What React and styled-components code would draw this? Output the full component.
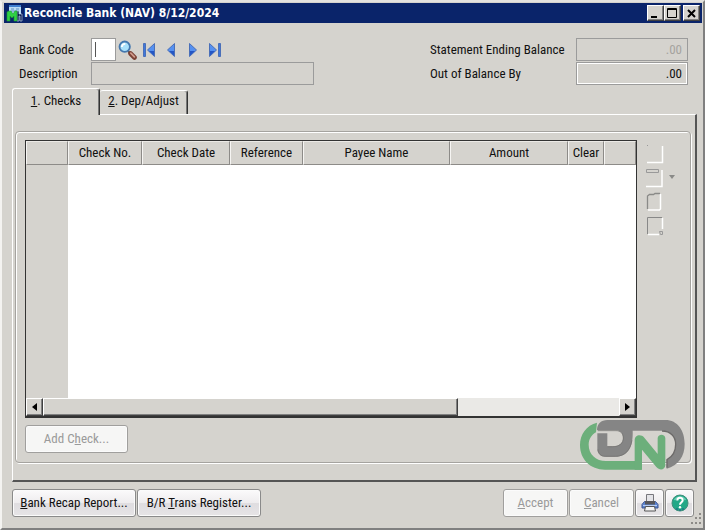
import React, { useState } from 'react'
import styled, { createGlobalStyle, css } from 'styled-components'

const GlobalStyle = createGlobalStyle`
  * {
    box-sizing: border-box;
  }
  body {
    margin: 0;
    background: #d5d3ce;
    color: #111;
    font-family: "Roboto Condensed", "Liberation Sans Narrow", "Liberation Sans", sans-serif;
    font-size: 13px;
    line-height: 16px;
  }
  button, input {
    font: inherit;
    color: inherit;
  }
`

const Window = styled.div`
  position: relative;
  display: flex;
  flex-direction: column;
  height: 100vh;
  min-height: 420px;
  padding: 1px;
  border: 2px solid;
  border-color: #e4e3df #808080 #808080 #f4f3f1;
`

const TitleBar = styled.header`
  display: flex;
  align-items: center;
  gap: 1px;
  height: 20px;
  margin: 0 0 0 1px;
  padding: 0 2px;
  background: #0a246a;
  color: #fff;
`

const Title = styled.h1`
  flex: 1;
  margin: 0;
  font: bold 12px/16px "DejaVu Sans Condensed", "DejaVu Sans", sans-serif;
`

const raised = css`
  border: 1px solid;
  border-color: #fff #404040 #404040 #fff;
  box-shadow: inset -1px -1px #808080;
  background: #d5d3ce;
`

const WindowButtons = styled.div`
  display: flex;
`

const WindowButton = styled.button`
  ${raised}
  width: 17px;
  height: 16px;
  padding: 0;
  margin-left: ${p => (p.$apart ? '2px' : 0)};
  svg {
    display: block;
  }
`

const Form = styled.div`
  display: flex;
  justify-content: space-between;
  padding: 15px 14px 3px 16px;
`

const Fields = styled.div`
  display: grid;
  grid-template-columns: ${p => p.$columns};
  grid-auto-rows: 23px;
  row-gap: 1px;
  align-items: center;
`

const FieldGroup = styled.div`
  display: flex;
  align-items: center;
`

const TextInput = styled.input`
  width: ${p => p.$width || '100%'};
  height: 23px;
  padding: 0 5px;
  border: 1px solid #9b9b9b;
  outline: none;
  background: ${p => (p.$editable ? '#fff' : '#d5d3ce')};
  box-shadow: ${p => (p.$inner ? 'inset 0 0 0 1px #fff' : 'none')};
  text-align: ${p => p.$align || 'left'};
  &:disabled {
    color: #a5a39f;
  }
`

/* steady caret while the field is empty */
const CodeInput = styled(TextInput)`
  padding: 0 3px;
  &:focus:placeholder-shown {
    caret-color: transparent;
    background: linear-gradient(#555, #555) 3px center / 1px 15px no-repeat #fff;
  }
`

const IconButton = styled.button`
  display: flex;
  align-items: center;
  justify-content: center;
  width: 22px;
  height: 22px;
  padding: 0;
  border: 0;
  background: none;
`

const Tabs = styled.div`
  display: flex;
  align-items: flex-end;
  padding-left: 9px;
`

const Tab = styled.button`
  position: relative;
  height: ${p => (p.$active ? '27px' : '24px')};
  width: 88px;
  margin-bottom: ${p => (p.$active ? '-1px' : 0)};
  padding: 0 0 3px;
  z-index: ${p => (p.$active ? 1 : 0)};
  border: 1px solid;
  border-color: #fff #333 transparent #fff;
  border-bottom: 0;
  border-left-width: ${p => (p.$active || p.$first ? '1px' : 0)};
  border-radius: 3px 3px 0 0;
  box-shadow: inset -1px 0 #777;
  background: #d5d3ce;
`

const TabPanel = styled.section`
  flex: 1;
  min-height: 0;
  display: flex;
  margin: 0 5px 0 9px;
  padding: 16px 4px 17px 2px;
  border: 1px solid;
  border-color: #fff #555 #555 #fff;
  border-bottom-width: 2px;
  border-right-width: 2px;
`

const GroupBox = styled.div`
  flex: 1;
  min-width: 0;
  display: flex;
  flex-direction: column;
  align-items: flex-start;
  gap: 7px;
  padding: 8px 9px 9px;
  border: 1px solid #a5a39f;
  border-radius: 4px;
  box-shadow: inset 1px 1px #fff, 1px 1px #fff;
`

const GridRow = styled.div`
  flex: 1;
  min-height: 0;
  width: 100%;
  display: flex;
  gap: 8px;
`

const GridFrame = styled.div`
  flex: 1;
  min-width: 0;
  display: flex;
  flex-direction: column;
  border: 1px solid #333;
  border-width: 1px 1px 2px 1px;
  background: #fff;
`

const GridBody = styled.div`
  flex: 1;
  min-height: 0;
  overflow: hidden;
`

const Table = styled.table`
  width: 100%;
  height: 100%;
  table-layout: fixed;
  border-collapse: separate;
  border-spacing: 0;
`

const HeadCell = styled.th`
  width: ${p => p.$width || 'auto'};
  height: 24px;
  padding: 0 0 1px;
  border: 1px solid;
  border-color: #eceae6 #8d8b88 #8d8b88 #f6f5f3;
  background: #d5d3ce;
  font-weight: normal;
`

const BodyCell = styled.td`
  padding: 0;
  background: ${p => (p.$rowHeader ? '#d5d3ce' : '#fff')};
`

const ScrollBar = styled.div`
  display: flex;
  height: 18px;
  background: #eae9e6;
`

const ScrollButton = styled.button`
  ${raised}
  display: flex;
  align-items: center;
  justify-content: center;
  width: 17px;
  padding: 0;
`

const ScrollTrack = styled.div`
  flex: 1;
  display: flex;
`

const ScrollThumb = styled.div`
  ${raised}
  width: 72%;
`

const SideTools = styled.div`
  display: flex;
  flex-direction: column;
  gap: 2px;
  width: 36px;
  padding-top: 3px;
`

const SideTool = styled.button`
  display: flex;
  align-items: center;
  width: 32px;
  height: 22px;
  padding: 0;
  border: 0;
  background: none;
`

const PushButton = styled.button`
  display: flex;
  align-items: center;
  justify-content: center;
  width: ${p => p.$width};
  height: 28px;
  padding: 0 2px 1px;
  border: 1px solid #8a8a8a;
  border-radius: 3px;
  box-shadow: inset 0 0 0 1px #fbfbfb;
  background: linear-gradient(#fbfafb 0%, #eeecee 50%, #dfdde0 52%, #e6e4e6 100%);
  &:disabled {
    border-color: #a09f9d;
    background: #f6f6f5;
    color: #9a9a9a;
  }
`

const Footer = styled.footer`
  display: flex;
  justify-content: space-between;
  padding: 7px 8px 10px 9px;
`

const ButtonRow = styled.div`
  display: flex;
  gap: 1px;
`

const Watermark = styled.svg`
  position: absolute;
  right: 15px;
  bottom: 53px;
  pointer-events: none;
`

const SizeGrip = styled.svg`
  position: absolute;
  right: 1px;
  bottom: 3px;
`

const COLUMNS = [
  { label: 'Check No.', width: '74px' },
  { label: 'Check Date', width: '88px' },
  { label: 'Reference', width: '73px' },
  { label: 'Payee Name', width: '147px' },
  { label: 'Amount', width: '118px' },
  { label: 'Clear', width: '36px' },
  { label: '' },
]

const AppIcon = () => (
  <svg width="17" height="18" viewBox="0 0 17 18" aria-hidden="true">
    <path d="M3 1h12v9H3z" fill="#b9dcf5" />
    <path d="M3 1h12v2H3z" fill="#3f7fd0" />
    <path d="M5 5h3M10 5h3M5 7h8" stroke="#5f8fc4" />
    <path d="M11 17V7h2v3h3v7h-2v-5h-1v5z" fill="#0a1c4d" stroke="#cfe0f5" strokeWidth=".6" />
    <path d="M1 17V8l2-1h2l2 3 2-3h2v10H8v-5l-2 2-2-2v5z" fill="#2fd044" stroke="#1f9a31" strokeWidth=".6" />
  </svg>
)

const Magnifier = () => (
  <svg width="19" height="20" viewBox="0 0 19 20" aria-hidden="true">
    <path d="M10 11l2 2" stroke="#555" strokeWidth="2" />
    <path d="M12.500 13.500l4 4" stroke="#7a4034" strokeWidth="4.600" strokeLinecap="round" />
    <path d="M12.800 13.200l3.600 3.600" stroke="#cf9a8c" strokeWidth="1.800" strokeLinecap="round" />
    <circle cx="6.700" cy="6.700" r="5.200" fill="#a9e0fa" stroke="#4477ae" strokeWidth="1.800" />
    <path d="M3.800 7a3.500 3.500 0 0 1 3.500-3.200" fill="none" stroke="#fff" strokeWidth="1.800" />
  </svg>
)

const NavArrow = ({ back, bar }) => (
  <svg width="14" height="16" viewBox="0 0 14 16" aria-hidden="true">
    <g
      transform={back ? 'translate(14 0) scale(-1 1)' : undefined}
      fill="#5590f0"
      stroke="#4a6fb8"
      strokeWidth="1"
      strokeLinejoin="round"
    >
      <path d={bar ? 'M1.500 1.500v13l7-6.500z' : 'M3.500 1.500v13l7-6.500z'} />
      <path d={bar ? 'M2 13.500V9h5z' : 'M4 13.500V9h5z'} fill="#2456c4" stroke="none" />
      {bar && <path d="M10.500 1.500h2v13h-2z" fill="#3f78dc" />}
    </g>
  </svg>
)

const Printer = () => (
  <svg width="18" height="20" viewBox="0 0 18 20" aria-hidden="true">
    <path d="M5.500 1.500h7V9h-7z" fill="#e4e4e8" stroke="#77777c" />
    <path d="M1 11.500l2.500-3h11l2.500 3v3.500H1z" fill="#5d86d4" stroke="#3d5490" />
    <path d="M4 8h10v3.500H4z" fill="#56565c" />
    <path d="M4.500 13.500h9l1 4.500h-11z" fill="#f4f4f4" stroke="#555" />
    <path d="M2 12.500h14" stroke="#b9cdf2" />
  </svg>
)

const HelpIcon = () => (
  <svg width="18" height="20" viewBox="0 0 18 20" aria-hidden="true">
    <circle cx="9" cy="10" r="8" fill="#22a887" stroke="#3f8f7c" />
    <path d="M3.500 7A6.500 6.500 0 0 1 14.500 7" fill="none" stroke="#69cfb5" strokeWidth="1.500" />
    <path d="M6.300 7.500c0-3.500 5.400-3.500 5.400-.3 0 2-2.700 2.200-2.700 4.500" fill="none" stroke="#fff" strokeWidth="2" />
    <circle cx="9" cy="14.200" r="1.200" fill="#fff" />
    <path d="M5.500 16h1M8.500 17h1M11.500 16h1" stroke="#154a8a" strokeWidth="1.400" />
  </svg>
)

const Logo = () => (
  <Watermark width="112" height="60" viewBox="0 0 336 180" role="img" aria-label="DN">
    <path
      d="M63 23C31 31 12 58 12 90c0 43 31 74 75 74h110v-26H90c-30 0-52-20-52-49 0-16 8-29 22-37z"
      fill="#6caf7b"
    />
    <path
      d="M63 46c0-20 12-31 31-31h174c37 0 58 32 58 72 0 38-19 64-54 74v-27c18-8 27-26 27-46 0-24-17-41-41-41h-88c2 50-15 78-52 78H88c-14 0-24-10-24-24V55h30v39h16c20 0 31-10 31-25 0-14-8-23-22-23z"
      fill="#858585"
    />
    <path
      d="M66 47h54c13 0 22 8 22 22 0 16-12 26-32 26H94M66 103c0 13 9 21 22 21h30c28 0 45-18 50-48"
      fill="none"
      stroke="#706e6d"
      strokeWidth="2"
    />
    <path
      d="M258 48c25 0 41 16 41 40 0 20-9 37-26 46v24"
      fill="none"
      stroke="#6c6a69"
      strokeWidth="4"
    />
    <path
      d="M176 140V76c0-17 19-20 29-8l40 49V70c0-14 23-14 23 0v80c-1 15-17 18-27 6l-43-52v60h-22z"
      fill="#6caf7b"
    />
  </Watermark>
)

const App = () => {
  const [bankCode, setBankCode] = useState('')
  const [tab, setTab] = useState('checks')

  return (
    <>
      <GlobalStyle />
      <Window>
        <TitleBar>
          <AppIcon />
          <Title>Reconcile Bank (NAV) 8/12/2024</Title>
          <WindowButtons>
            <WindowButton aria-label="Minimize">
              <svg width="14" height="13"><path d="M3 10h6" stroke="#000" strokeWidth="2" /></svg>
            </WindowButton>
            <WindowButton aria-label="Maximize">
              <svg width="14" height="13">
                <path d="M2.500 1.500h9v9h-9zM2 2.500h10" fill="none" stroke="#000" />
              </svg>
            </WindowButton>
            <WindowButton $apart aria-label="Close">
              <svg width="14" height="13">
                <path d="M4 3l7 7M11 3l-7 7" stroke="#000" strokeWidth="2" />
              </svg>
            </WindowButton>
          </WindowButtons>
        </TitleBar>

        <Form>
          <Fields $columns="72px 223px">
            <label htmlFor="bank-code">Bank Code</label>
            <FieldGroup>
              <CodeInput
                id="bank-code"
                $editable
                $width="25px"
                placeholder=" "
                value={bankCode}
                autoFocus
                onChange={e => setBankCode(e.target.value)}
              />
              <IconButton aria-label="Look up bank code"><Magnifier /></IconButton>
              <IconButton aria-label="First record"><NavArrow back bar /></IconButton>
              <IconButton aria-label="Previous record"><NavArrow back /></IconButton>
              <IconButton aria-label="Next record"><NavArrow /></IconButton>
              <IconButton aria-label="Last record"><NavArrow bar /></IconButton>
            </FieldGroup>
            <label htmlFor="description">Description</label>
            <TextInput id="description" readOnly />
          </Fields>
          <Fields $columns="146px 112px">
            <label htmlFor="ending-balance">Statement Ending Balance</label>
            <TextInput id="ending-balance" $align="right" defaultValue=".00" disabled />
            <label htmlFor="out-of-balance">Out of Balance By</label>
            <TextInput id="out-of-balance" $align="right" $inner defaultValue=".00" readOnly />
          </Fields>
        </Form>

        <Tabs role="tablist">
          <Tab role="tab" $active={tab === 'checks'} $first onClick={() => setTab('checks')}>
            <u>1</u>. Checks
          </Tab>
          <Tab role="tab" $active={tab === 'deposits'} onClick={() => setTab('deposits')}>
            <u>2</u>. Dep/Adjust
          </Tab>
        </Tabs>

        <TabPanel role="tabpanel">
          <GroupBox>
            <GridRow>
              <GridFrame>
                <GridBody>
                  <Table>
                    <thead>
                      <tr>
                        <HeadCell $width="42px" />
                        {COLUMNS.map(col => (
                          <HeadCell key={col.label} $width={col.width}>{col.label}</HeadCell>
                        ))}
                      </tr>
                    </thead>
                    <tbody>
                      <tr>
                        <BodyCell $rowHeader />
                        <BodyCell colSpan={COLUMNS.length} />
                      </tr>
                    </tbody>
                  </Table>
                </GridBody>
                <ScrollBar>
                  <ScrollButton aria-label="Scroll left">
                    <svg width="5" height="8"><path d="M5 0v8L0 4z" /></svg>
                  </ScrollButton>
                  <ScrollTrack>
                    <ScrollThumb />
                  </ScrollTrack>
                  <ScrollButton aria-label="Scroll right">
                    <svg width="5" height="8"><path d="M0 0v8l5-4z" /></svg>
                  </ScrollButton>
                </ScrollBar>
              </GridFrame>
              <SideTools>
                <SideTool aria-label="New row">
                  <svg width="20" height="20" fill="none">
                    <path d="M2 1.500h1" stroke="#999" />
                    <path d="M17.500 2v16.500H2" stroke="#fff" strokeWidth="1.500" />
                  </svg>
                </SideTool>
                <SideTool aria-label="Insert row">
                  <svg width="32" height="20" fill="none">
                    <path d="M1.500 1.500h12v3h-12z" stroke="#999" />
                    <path d="M17 2v16.500H1" stroke="#fff" strokeWidth="1.500" />
                    <path d="M24 7h6l-3 4z" fill="#8a8a88" />
                  </svg>
                </SideTool>
                <SideTool aria-label="Open row">
                  <svg width="20" height="20" fill="none">
                    <path d="M2.500 17V4l2-1.500h4L10 1.500h5" stroke="#8a8a88" strokeWidth="1.300" />
                    <path d="M15.500 2v15l-1 1H3" stroke="#fff" strokeWidth="1.500" />
                  </svg>
                </SideTool>
                <SideTool aria-label="Row settings">
                  <svg width="20" height="20" fill="none">
                    <path d="M2.500 18V1.500H17" stroke="#888" />
                    <path d="M17.500 2v11M3 18.500h11" stroke="#fff" strokeWidth="1.500" />
                    <path d="M14.500 15.500h3v3h-2z" stroke="#999" />
                  </svg>
                </SideTool>
              </SideTools>
            </GridRow>
            <PushButton $width="103px" disabled><span>Add C<u>h</u>eck...</span></PushButton>
          </GroupBox>
        </TabPanel>

        <Footer>
          <ButtonRow>
            <PushButton $width="124px"><span><u>B</u>ank Recap Report...</span></PushButton>
            <PushButton $width="124px"><span>B/R <u>T</u>rans Register...</span></PushButton>
          </ButtonRow>
          <ButtonRow>
            <PushButton $width="65px" disabled><span><u>A</u>ccept</span></PushButton>
            <PushButton $width="65px" disabled><span><u>C</u>ancel</span></PushButton>
            <PushButton $width="29px" aria-label="Print"><Printer /></PushButton>
            <PushButton $width="29px" aria-label="Help"><HelpIcon /></PushButton>
          </ButtonRow>
        </Footer>

        <Logo />
        <SizeGrip width="12" height="12" fill="#8c8a87" aria-hidden="true">
          <path d="M9 0h2v2H9zM5 4h2v2H5zM9 4h2v2H9zM1 9h2v2H1zM5 9h2v2H5zM9 9h2v2H9z" />
        </SizeGrip>
      </Window>
    </>
  )
}

export default App
